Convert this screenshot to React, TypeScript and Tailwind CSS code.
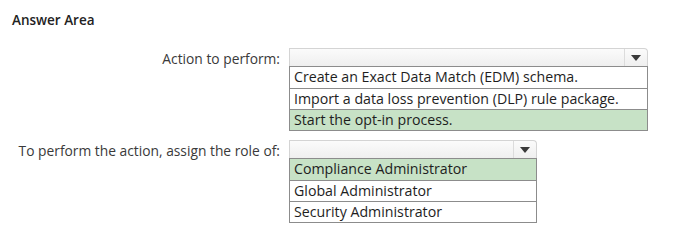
import React from "react";

const Caret = () => (
  <svg width="10" height="6" viewBox="0 0 10 6">
    <path d="M0 0 L10 0 L5 6 Z" fill="#3a3a3a" />
  </svg>
);

type DropProps = {
  width: string;
  options: string[];
  selected: number;
};

const Dropdown = ({ width, options, selected }: DropProps) => (
  <div className={`flex flex-col ${width}`}>
    <div className="flex h-[18px] rounded-tr-[4px] border border-b-0 border-[#d4d4d4] bg-gradient-to-b from-[#fbfbfb] to-[#efefef]">
      <div className="flex-1" />
      <div className="flex w-[23px] items-center justify-center border-l border-[#dcdcdc]">
        <Caret />
      </div>
    </div>
    <div className="flex flex-col border border-[#8c8c8c] bg-white">
      {options.map((opt, i) => (
        <div
          key={opt}
          className={`flex h-[21px] items-center px-[4px] text-[14.2px] leading-none text-[#1e1e1e] ${
            i > 0 ? "border-t border-[#8c8c8c]" : ""
          } ${i === selected ? "bg-[#c7e2c6]" : ""}`}
        >
          {opt}
        </div>
      ))}
    </div>
  </div>
);

const App = () => (
  <div
    className="h-[241px] w-[689px] bg-white text-[#333]"
    style={{ fontFamily: '"Open Sans", "Noto Sans", sans-serif' }}
  >
    <div className="px-[12px] pt-[10px] text-[13.5px] font-semibold leading-[20px] text-[#222]">
      Answer Area
    </div>
    <div className="mt-[18px] flex">
      <div className="w-[280px] text-right text-[13.8px] leading-[22px] text-[#3a3a3a]">
        Action to perform:
      </div>
      <div className="ml-[9px]">
        <Dropdown
          width="w-[359px]"
          selected={2}
          options={[
            "Create an Exact Data Match (EDM) schema.",
            "Import a data loss prevention (DLP) rule package.",
            "Start the opt-in process.",
          ]}
        />
      </div>
    </div>
    <div className="mt-[9px] flex">
      <div className="w-[280px] text-right text-[13.8px] leading-[22px] text-[#3a3a3a]">
        To perform the action, assign the role of:
      </div>
      <div className="ml-[9px]">
        <Dropdown
          width="w-[248px]"
          selected={0}
          options={[
            "Compliance Administrator",
            "Global Administrator",
            "Security Administrator",
          ]}
        />
      </div>
    </div>
  </div>
);

export default App;
